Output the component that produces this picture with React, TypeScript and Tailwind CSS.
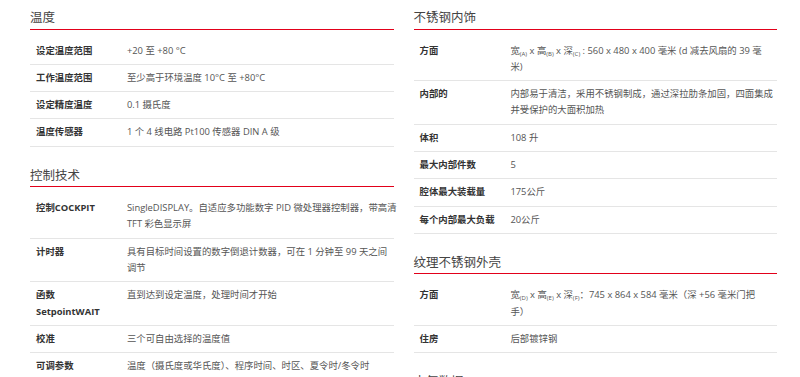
import React from "react";

type Row = { label: React.ReactNode; value: React.ReactNode };

const Sub = ({ children }: { children: React.ReactNode }) => (
  <sub className="text-[6px] align-baseline relative top-[2px] leading-none">{children}</sub>
);

function Section({ title, rows, first }: { title: string; rows: Row[]; first?: boolean }) {
  return (
    <div className={first ? "pt-[9px]" : "pt-[20px]"}>
      <div className="text-[12.5px] leading-[18px] text-[#444] pb-[1.5px] border-b-[1.5px] border-[#e2001a]">
        {title}
      </div>
      <div className="mt-[8px]">
        {rows.map((r, i) => (
          <div key={i} className="flex border-b border-[#e5e5e5] py-[5px] text-[9.4px] leading-[16.3px]">
            <div className="w-1/4 shrink-0 px-[6px] font-bold text-[#333] whitespace-nowrap">{r.label}</div>
            <div className="flex-1 min-w-0 px-[6px] text-[#555] whitespace-nowrap">{r.value}</div>
          </div>
        ))}
      </div>
    </div>
  );
}

export default function App() {
  const left1: Row[] = [
    { label: "设定温度范围", value: "+20 至 +80 °C" },
    { label: "工作温度范围", value: "至少高于环境温度 10°C 至 +80°C" },
    { label: "设定精度温度", value: "0.1 摄氏度" },
    { label: "温度传感器", value: "1 个 4 线电路 Pt100 传感器 DIN A 级" },
  ];
  const left2: Row[] = [
    {
      label: "控制COCKPIT",
      value: (
        <>
          SingleDISPLAY。自适应多功能数字 PID 微处理器控制器，带高清
          <br />
          TFT 彩色显示屏
        </>
      ),
    },
    {
      label: "计时器",
      value: (
        <>
          具有目标时间设置的数字倒退计数器，可在 1 分钟至 99 天之间
          <br />
          调节
        </>
      ),
    },
    {
      label: (
        <>
          函数
          <br />
          SetpointWAIT
        </>
      ),
      value: "直到达到设定温度，处理时间才开始",
    },
    { label: "校准", value: "三个可自由选择的温度值" },
    { label: "可调参数", value: "温度（摄氏度或华氏度）、程序时间、时区、夏令时/冬令时" },
  ];
  const right1: Row[] = [
    {
      label: "方面",
      value: (
        <>
          宽<Sub>(A)</Sub> x 高<Sub>(B)</Sub> x 深<Sub>(C)</Sub> : 560 x 480 x 400 毫米 (d 减去风扇的 39 毫
          <br />
          米)
        </>
      ),
    },
    {
      label: "内部的",
      value: (
        <>
          内部易于清洁，采用不锈钢制成，通过深拉肋条加固，四面集成
          <br />
          并受保护的大面积加热
        </>
      ),
    },
    { label: "体积", value: "108 升" },
    { label: "最大内部件数", value: "5" },
    { label: "腔体最大装载量", value: "175公斤" },
    { label: "每个内部最大负载", value: "20公斤" },
  ];
  const right2: Row[] = [
    {
      label: "方面",
      value: (
        <>
          宽<Sub>(D)</Sub> x 高<Sub>(E)</Sub> x 深<Sub>(F)</Sub>：745 x 864 x 584 毫米（深 +56 毫米门把
          <br />
          手）
        </>
      ),
    },
    { label: "住房", value: "后部镀锌钢" },
  ];
  return (
    <div className="w-[800px] h-[377px] overflow-hidden bg-white font-['Open_Sans','Noto_Sans_CJK_SC',sans-serif]">
      <div className="grid grid-cols-2 gap-x-[20px] pl-[30px] pr-[23px]">
        <div>
          <Section first title="温度" rows={left1} />
          <Section title="控制技术" rows={left2} />
        </div>
        <div>
          <Section first title="不锈钢内饰" rows={right1} />
          <Section title="纹理不锈钢外壳" rows={right2} />
          <Section title="电气数据" rows={[]} />
        </div>
      </div>
    </div>
  );
}
